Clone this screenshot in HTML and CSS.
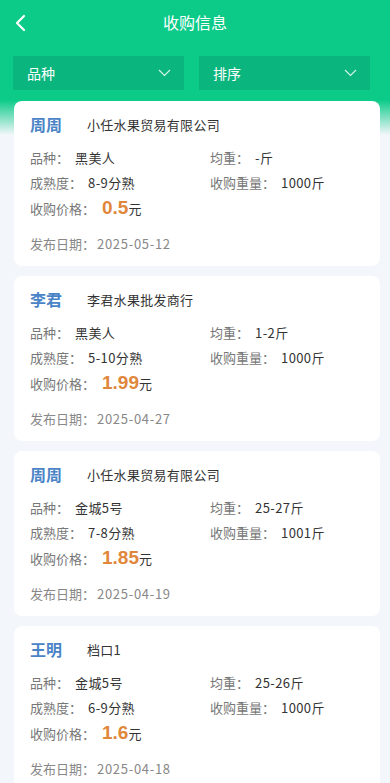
FILE: index.html
```html
<!DOCTYPE html>
<html lang="zh">
<head>
    <meta charset="UTF-8">
    <meta name="viewport" content="width=device-width, initial-scale=1.0">
    <title>收购信息</title>
    <link rel="stylesheet" href="styles.css">
</head>
<body>
<div class="page">
    <div class="header">
        <span class="back">
            <svg width="12" height="18" viewBox="0 0 12 18"><path d="M10 2 L3 9 L10 16" fill="none" stroke="#fff" stroke-width="2.2" stroke-linecap="round" stroke-linejoin="round"/></svg>
        </span>
        <h1>收购信息</h1>
    </div>

    <div class="filters">
        <div class="select">
            <span>品种</span>
            <svg width="13" height="8" viewBox="0 0 13 8"><path d="M1 1 L6.5 6.5 L12 1" fill="none" stroke="#d8f5ea" stroke-width="1.1"/></svg>
        </div>
        <div class="select">
            <span>排序</span>
            <svg width="13" height="8" viewBox="0 0 13 8"><path d="M1 1 L6.5 6.5 L12 1" fill="none" stroke="#d8f5ea" stroke-width="1.1"/></svg>
        </div>
    </div>

    <div class="list">
        <div class="card">
            <div class="top"><span class="name">周周</span><span class="shop">小任水果贸易有限公司</span></div>
            <div class="info">
                <div><span class="label">品种：</span><span class="val">黑美人</span></div>
                <div><span class="label">均重：</span><span class="val">-斤</span></div>
                <div><span class="label">成熟度：</span><span class="val">8-9分熟</span></div>
                <div><span class="label">收购重量：</span><span class="val">1000斤</span></div>
                <div class="full"><span class="label">收购价格：</span><span class="price">0.5</span><span class="unit">元</span></div>
            </div>
            <div class="date">发布日期：<span class="num">2025-05-12</span></div>
        </div>

        <div class="card">
            <div class="top"><span class="name">李君</span><span class="shop">李君水果批发商行</span></div>
            <div class="info">
                <div><span class="label">品种：</span><span class="val">黑美人</span></div>
                <div><span class="label">均重：</span><span class="val">1-2斤</span></div>
                <div><span class="label">成熟度：</span><span class="val">5-10分熟</span></div>
                <div><span class="label">收购重量：</span><span class="val">1000斤</span></div>
                <div class="full"><span class="label">收购价格：</span><span class="price">1.99</span><span class="unit">元</span></div>
            </div>
            <div class="date">发布日期：<span class="num">2025-04-27</span></div>
        </div>

        <div class="card">
            <div class="top"><span class="name">周周</span><span class="shop">小任水果贸易有限公司</span></div>
            <div class="info">
                <div><span class="label">品种：</span><span class="val">金城5号</span></div>
                <div><span class="label">均重：</span><span class="val">25-27斤</span></div>
                <div><span class="label">成熟度：</span><span class="val">7-8分熟</span></div>
                <div><span class="label">收购重量：</span><span class="val">1001斤</span></div>
                <div class="full"><span class="label">收购价格：</span><span class="price">1.85</span><span class="unit">元</span></div>
            </div>
            <div class="date">发布日期：<span class="num">2025-04-19</span></div>
        </div>

        <div class="card">
            <div class="top"><span class="name">王明</span><span class="shop">档口1</span></div>
            <div class="info">
                <div><span class="label">品种：</span><span class="val">金城5号</span></div>
                <div><span class="label">均重：</span><span class="val">25-26斤</span></div>
                <div><span class="label">成熟度：</span><span class="val">6-9分熟</span></div>
                <div><span class="label">收购重量：</span><span class="val">1000斤</span></div>
                <div class="full"><span class="label">收购价格：</span><span class="price">1.6</span><span class="unit">元</span></div>
            </div>
            <div class="date">发布日期：<span class="num">2025-04-18</span></div>
        </div>
    </div>
</div>
</body>
</html>
```

FILE: styles.css
```css
body {
    margin: 0;
    font-family: "Noto Sans CJK SC", "Noto Sans", sans-serif;
    background: linear-gradient(#0ccb89 0, #0ccb89 100px, #f3f6fa 135px, #f3f6fa 100%);
    min-height: 783px;
}

/* header */
.header {
    position: relative;
    height: 44px;
    display: flex;
    align-items: center;
    justify-content: center;
}
.header h1 {
    margin: 0;
    color: #fff;
    font-size: 16px;
    font-weight: normal;
}
.back {
    position: absolute;
    left: 14px;
    top: 13px;
}

/* filters */
.filters {
    display: grid;
    grid-template-columns: 1fr 1fr;
    gap: 15px;
    padding: 12px 20px 0 13px;
}
.select {
    height: 34px;
    background: #0bb67e;
    display: flex;
    align-items: center;
    justify-content: space-between;
    padding: 0 13px 0 14px;
    color: #fff;
    font-size: 14px;
}

/* list */
.list {
    padding: 11px 10px 0 14px;
}
.card {
    background: #fff;
    border-radius: 8px;
    padding: 12px 16px 10px;
    margin-bottom: 10px;
}
.top {
    display: flex;
    align-items: center;
    height: 22px;
}
.name {
    color: #4a84c7;
    font-size: 16px;
    font-weight: bold;
    width: 57px;
}
.shop {
    color: #333;
    font-size: 13px;
    letter-spacing: 0.3px;
}
.info {
    display: grid;
    grid-template-columns: 180px 1fr;
    margin-top: 10px;
    font-size: 13px;
    line-height: 25px;
}
.info .full {
    grid-column: 1 / 3;
}
.label {
    color: #777;
}
.val {
    color: #333;
    margin-left: 6px;
    letter-spacing: 0.4px;
}
.price {
    color: #e0873b;
    font-family: "Liberation Sans", Arial, sans-serif;
    font-weight: bold;
    font-size: 19px;
    margin-left: 7px;
}
.unit {
    color: #333;
    font-size: 13px;
}
.date {
    margin-top: 10px;
    line-height: 25px;
    font-size: 13px;
    color: #888;
}
.num {
    margin-left: 2px;
    letter-spacing: 0.7px;
}
```
